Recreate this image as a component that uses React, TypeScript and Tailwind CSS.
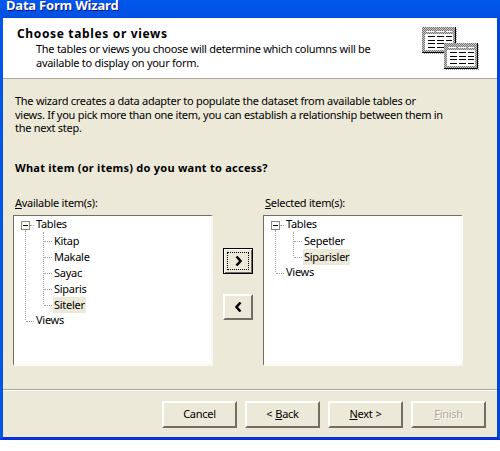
import React from 'react';

function TablesIcon() {
  const rows = [9.5, 13.5, 16.5, 20.5];
  const sheet = (x: number, y: number) => (
    <g transform={`translate(${x} ${y})`}>
      <rect x="1" y="1" width="34" height="26" fill="url(#stipple)" />
      <rect x="0" y="0" width="33.5" height="25.5" fill="url(#checker)" stroke="none" />
      <path d="M33.5 0 V25.5 H0" fill="none" stroke="black" />
      <rect x="3" y="7" width="28" height="16" fill="white" />
      <path d="M4 4.5 H30" stroke="white" strokeDasharray="8 2" />
      {rows.map((r) => (
        <path key={r} d={`M6 ${r} H13 M15 ${r} H22 M24 ${r} H30`} stroke="black" />
      ))}
    </g>
  );
  return (
    <svg width="62" height="46" viewBox="0 0 62 46" className="absolute left-[419px] top-[9px]">
      <defs>
        <pattern id="checker" width="2" height="2" patternUnits="userSpaceOnUse">
          <rect width="2" height="2" fill="#777777" />
          <rect width="1" height="1" fill="#c8c8c8" />
          <rect x="1" y="1" width="1" height="1" fill="#c8c8c8" />
        </pattern>
        <pattern id="stipple" width="2" height="2" patternUnits="userSpaceOnUse">
          <rect width="2" height="2" fill="white" />
          <rect width="1" height="1" fill="#999999" />
          <rect x="1" y="1" width="1" height="1" fill="#999999" />
        </pattern>
      </defs>
      {sheet(0, 0)}
      {sheet(22, 16)}
    </svg>
  );
}

function TreeItem({ label, selected }: { label: string; selected?: boolean }) {
  return (
    <div className="relative h-[16px] pl-[39px] flex items-center">
      <div className="absolute left-[30px] top-[8px] w-[8px] border-t border-dotted border-[#a0a0a0]" />
      <span className={`px-[1px] leading-[16px] ${selected ? 'bg-[#ece9d8]' : ''}`}>{label}</span>
    </div>
  );
}

function Tree({ items, selected }: { items: string[]; selected: string }) {
  const branch = items.length * 16 - 8;
  return (
    <div className="relative w-[200px] h-[151px] bg-white border-t border-l border-[#716f64] border-b-2 border-r-2 border-b-[#f9f8f3] border-r-[#f9f8f3] pt-[1px]">
      <div className="absolute left-[11px] top-[14px] border-l border-dotted border-[#a0a0a0]" style={{ height: branch + 18 }} />
      <div className="absolute left-[29px] top-[16px] border-l border-dotted border-[#a0a0a0]" style={{ height: branch }} />
      <div className="relative h-[16px] pl-[21px] flex items-center">
        <div className="absolute left-[7px] top-[4px] w-[9px] h-[9px] bg-white border border-[#8a8a7a] flex items-center justify-center">
          <div className="w-[5px] h-[1px] bg-black" />
        </div>
        <div className="absolute left-[16px] top-[8px] w-[4px] border-t border-dotted border-[#a0a0a0]" />
        <span className="px-[1px]">Tables</span>
      </div>
      {items.map((item) => (
        <TreeItem key={item} label={item} selected={item === selected} />
      ))}
      <div className="relative h-[16px] pl-[21px] flex items-center">
        <div className="absolute left-[12px] top-[8px] w-[8px] border-t border-dotted border-[#a0a0a0]" />
        <span className="px-[1px]">Views</span>
      </div>
    </div>
  );
}

function Button({ children, disabled }: { children: React.ReactNode; disabled?: boolean }) {
  return (
    <div className={`w-[75px] h-[27px] flex items-center justify-center gap-[3px] bg-[#ece9d8] border-t-2 border-l-2 border-t-white border-l-white border-b-2 border-r-2 border-b-[#716f64] border-r-[#716f64] ${disabled ? 'text-[#aca899] [text-shadow:1px_1px_white]' : ''}`}>
      {children}
    </div>
  );
}

export default function App() {
  return (
    <div className="w-[500px] h-[451px] bg-white text-black text-[11px] tracking-[-0.27px] font-['Noto_Sans',sans-serif] overflow-hidden">
      <div className="h-[440px] flex flex-col bg-[#0831d9] border-l-[3px] border-r-[3px] border-l-[#0055ea] border-r-[#0046d5] border-b-[3px] border-b-[#0831d9]">
        <div className="-mx-[3px] h-[18px] shrink-0 px-[6px] flex items-start bg-gradient-to-b from-[#0058ee] to-[#0250e0]">
          <span className="block text-white font-bold text-[13px] tracking-[-0.2px] leading-[11px] [text-shadow:1px_1px_#0f1089]">Data Form Wizard</span>
        </div>
        <div className="relative h-[60px] shrink-0 bg-white pl-[14px] pt-[9px]">
          <div className="font-bold leading-[14px] text-[12px] tracking-[0.65px]">Choose tables or views</div>
          <div className="pl-[19px] pt-[1px] leading-[14px]">
            <div>The tables or views you choose will determine which columns will be</div>
            <div>available to display on your form.</div>
          </div>
          <TablesIcon />
        </div>
        <div className="flex-1 flex flex-col bg-[#ece9d8] border-t-[1px] border-t-[#aca899]">
          <div className="px-[12px] pt-[15px] leading-[13.5px]">
            <div>The wizard creates a data adapter to populate the dataset from available tables or</div>
            <div>views. If you pick more than one item, you can establish a relationship between them in</div>
            <div>the next step.</div>
          </div>
          <div className="px-[12px] pt-[26px] font-bold tracking-[0.25px] leading-[14px]">What item (or items) do you want to access?</div>
          <div className="flex px-[10px] pt-[21px] gap-[10px] items-start">
            <div>
              <div className="leading-[14px] pb-[5px] pl-[2px]"><u>A</u>vailable item(s):</div>
              <Tree items={['Kitap', 'Makale', 'Sayac', 'Siparis', 'Siteler']} selected="Siteler" />
            </div>
            <div className="flex flex-col gap-[20px] pt-[52px]">
              <div className="w-[30px] h-[26px] flex items-center justify-center bg-[#ece9d8] border border-black shadow-[inset_1px_1px_white,inset_-1px_-1px_#716f64]">
                <div className="w-[22px] h-[18px] border border-dotted border-black flex items-center justify-center">
                  <svg width="7" height="10" viewBox="0 0 7 10"><path d="M1.5 0.5 L5.5 5 L1.5 9.5" fill="none" stroke="black" strokeWidth="2.5" /></svg>
                </div>
              </div>
              <div className="w-[30px] h-[26px] flex items-center justify-center bg-[#ece9d8] border-t-2 border-l-2 border-t-white border-l-white border-b-2 border-r-2 border-b-[#716f64] border-r-[#716f64]">
                <svg width="7" height="10" viewBox="0 0 7 10"><path d="M5.5 0.5 L1.5 5 L5.5 9.5" fill="none" stroke="black" strokeWidth="2.5" /></svg>
              </div>
            </div>
            <div>
              <div className="leading-[14px] pb-[5px] pl-[2px]"><u>S</u>elected item(s):</div>
              <Tree items={['Sepetler', 'Siparisler']} selected="Siparisler" />
            </div>
          </div>
          <div className="mt-auto border-t border-t-[#aca899] shadow-[inset_0_1px_white] h-[48px] flex justify-end items-start gap-[8px] pr-[11px] pt-[11px]">
            <Button>Cancel</Button>
            <Button><span>&lt;</span><span><u>B</u>ack</span></Button>
            <Button><span><u>N</u>ext</span><span>&gt;</span></Button>
            <Button disabled><span><u>F</u>inish</span></Button>
          </div>
        </div>
      </div>
    </div>
  );
}
